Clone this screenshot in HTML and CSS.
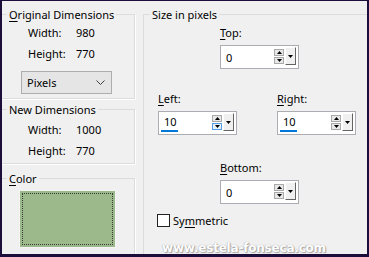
FILE: index.html
```html
<!DOCTYPE html>
<html lang="en">
<head>
  <meta charset="UTF-8" />
  <title>Add Borders</title>
  <link rel="stylesheet" href="styles.css">
</head>
<body>
  <div class="dialog">
    <div class="left-col">
      <!-- Original Dimensions -->
      <fieldset class="group group-orig">
        <legend><u>O</u>riginal Dimensions</legend>
        <div class="dims">
          <span>Width:</span><span>980</span>
          <span>Height:</span><span>770</span>
        </div>
        <div class="select">
          <span>Pixels</span>
          <svg width="9" height="6" viewBox="0 0 9 6"><polyline points="0.5,0.5 4.5,4.5 8.5,0.5" fill="none" stroke="#404040" stroke-width="1"/></svg>
        </div>
      </fieldset>

      <!-- New Dimensions -->
      <fieldset class="group group-new">
        <legend>New Dimensions</legend>
        <div class="dims">
          <span>Width:</span><span>1000</span>
          <span>Height:</span><span>770</span>
        </div>
      </fieldset>

      <!-- Color -->
      <fieldset class="group group-color">
        <legend><u>C</u>olor</legend>
        <div class="swatch"></div>
      </fieldset>
    </div>

    <!-- Size in pixels -->
    <fieldset class="group group-size">
      <legend>Size in pixels</legend>

      <div class="field field-top">
        <label><u>T</u>op:</label>
        <div class="spin">
          <div class="spin-value">0</div>
          <div class="spin-arrows">
            <span class="arrow"><svg width="5" height="3" viewBox="0 0 5 3"><polygon points="2.5,0 5,3 0,3" fill="#000"/></svg></span>
            <span class="arrow"><svg width="5" height="3" viewBox="0 0 5 3"><polygon points="0,0 5,0 2.5,3" fill="#000"/></svg></span>
          </div>
          <div class="spin-drop"><svg width="5" height="3" viewBox="0 0 5 3"><polygon points="0,0 5,0 2.5,3" fill="#000"/></svg></div>
        </div>
      </div>

      <div class="sides">
        <div class="field">
          <label><u>L</u>eft:</label>
          <div class="spin spin-focus">
            <div class="spin-value">10<span class="ink"></span></div>
            <div class="spin-arrows">
              <span class="arrow"><svg width="5" height="3" viewBox="0 0 5 3"><polygon points="2.5,0 5,3 0,3" fill="#000"/></svg></span>
              <span class="arrow hot"><svg width="5" height="3" viewBox="0 0 5 3"><polygon points="0,0 5,0 2.5,3" fill="#000"/></svg></span>
            </div>
            <div class="spin-drop"><svg width="5" height="3" viewBox="0 0 5 3"><polygon points="0,0 5,0 2.5,3" fill="#000"/></svg></div>
          </div>
        </div>
        <div class="field">
          <label><u>R</u>ight:</label>
          <div class="spin spin-focus">
            <div class="spin-value">10<span class="ink"></span></div>
            <div class="spin-arrows">
              <span class="arrow"><svg width="5" height="3" viewBox="0 0 5 3"><polygon points="2.5,0 5,3 0,3" fill="#000"/></svg></span>
              <span class="arrow"><svg width="5" height="3" viewBox="0 0 5 3"><polygon points="0,0 5,0 2.5,3" fill="#000"/></svg></span>
            </div>
            <div class="spin-drop"><svg width="5" height="3" viewBox="0 0 5 3"><polygon points="0,0 5,0 2.5,3" fill="#000"/></svg></div>
          </div>
        </div>
      </div>

      <div class="field field-bottom">
        <label><u>B</u>ottom:</label>
        <div class="spin">
          <div class="spin-value">0</div>
          <div class="spin-arrows">
            <span class="arrow"><svg width="5" height="3" viewBox="0 0 5 3"><polygon points="2.5,0 5,3 0,3" fill="#000"/></svg></span>
            <span class="arrow"><svg width="5" height="3" viewBox="0 0 5 3"><polygon points="0,0 5,0 2.5,3" fill="#000"/></svg></span>
          </div>
          <div class="spin-drop"><svg width="5" height="3" viewBox="0 0 5 3"><polygon points="0,0 5,0 2.5,3" fill="#000"/></svg></div>
        </div>
      </div>

      <div class="check">
        <span class="check-box"></span>
        <span>Sy<u>m</u>metric</span>
      </div>

      <div class="watermark">www.estela-fonseca.com</div>
    </fieldset>
  </div>
</body>
</html>
```

FILE: styles.css
```css
body {
  margin: 0;
  font-family: 'Noto Sans', sans-serif;
  font-size: 11px;
  color: #000;
}
.dialog {
  width: 369px;
  height: 257px;
  box-sizing: border-box;
  border-style: solid;
  border-color: #1b0e3b;
  border-width: 1px 2px 3px 2px;
  background: #f0f0f0;
  display: flex;
  overflow: hidden;
}
u {
  text-decoration: underline;
  text-underline-offset: 2px;
}

/* group boxes */
.group {
  margin: 0;
  padding: 0;
  min-width: 0;
  box-sizing: border-box;
  border: 1px solid #dcdcdc;
  box-shadow: 1px 1px 0 #fff;
}
.group legend {
  padding: 0 2px;
  line-height: 15px;
}
.left-col {
  flex: 0 0 139px;
  margin-left: -6px;
  padding-top: 6px;
}
.group-orig {
  height: 92px;
}
.group-orig legend,
.group-new legend,
.group-color legend {
  margin-left: 10px;
}
.group-new {
  height: 62px;
  margin-top: 3px;
}
.group-color {
  height: 100px;
  margin-top: 7px;
}
.dims {
  display: grid;
  grid-template-columns: 48px auto;
  row-gap: 6px;
  line-height: 15px;
  margin: 3px 0 0 31px;
}
.group-new .dims {
  margin-top: 5px;
}
.select {
  width: 91px;
  height: 23px;
  box-sizing: border-box;
  margin: 10px 0 0 24px;
  padding: 0 6px 0 5px;
  background: #e5e5e5;
  border: 1px solid #adadad;
  display: flex;
  align-items: center;
  justify-content: space-between;
}
.swatch {
  width: 97px;
  height: 58px;
  box-sizing: border-box;
  margin: 4px 0 0 22px;
  background: #9cb98c;
  border: 1px solid #f4f4f4;
  outline: 1px dotted #3a3a3a;
  outline-offset: -4px;
}

/* size in pixels */
.group-size {
  flex: 0 0 240px;
  height: 262px;
  margin: 6px 0 0 8px;
}
.group-size legend {
  margin-left: 6px;
}
.field label {
  display: block;
  line-height: 15px;
  margin-bottom: 5px;
}
.field-top {
  margin: 3px 0 0 76px;
}
.sides {
  display: flex;
  gap: 40px;
  margin: 22px 0 0 14px;
}
.field-bottom {
  margin: 25px 0 0 76px;
}
.spin {
  width: 79px;
  height: 24px;
  box-sizing: border-box;
  border: 1px solid #abadb3;
  background: #fff;
  display: flex;
  align-items: flex-start;
  padding: 1px 2px 0 5px;
}
.spin-value {
  flex: 1;
  line-height: 15px;
  padding-top: 3px;
}
.spin-focus .spin-value {
  padding-top: 1px;
}
.ink {
  display: block;
  width: 17px;
  height: 2px;
  margin: 1px 0 0 -3px;
  background: #0078d7;
}
.spin-arrows {
  display: flex;
  flex-direction: column;
  gap: 1px;
  margin-top: 2px;
}
.arrow {
  width: 10px;
  height: 7px;
  box-sizing: border-box;
  border: 1px solid #a9a9a9;
  background: #e8e8e8;
  display: flex;
  align-items: center;
  justify-content: center;
}
.arrow.hot {
  border-color: #569de5;
  background: #e5f1fb;
}
.spin-drop {
  width: 11px;
  height: 18px;
  box-sizing: border-box;
  margin-left: 1px;
  background: #f0f0f0;
  border: 1px solid;
  border-color: #fff #646464 #646464 #fff;
  display: flex;
  align-items: center;
  justify-content: center;
}
.check {
  display: flex;
  align-items: center;
  gap: 3px;
  line-height: 15px;
  margin: 9px 0 0 13px;
}
.check-box {
  width: 13px;
  height: 13px;
  box-sizing: border-box;
  border: 1px solid #222;
  background: #fff;
}
.watermark {
  margin: 13px 0 0 18px;
  font-family: 'DejaVu Sans', sans-serif;
  font-weight: bold;
  font-size: 12px;
  line-height: 15px;
  letter-spacing: -0.2px;
  color: #fff;
  text-shadow: 0 0 1px #888, 1px 1px 1px #aaa;
}
```
